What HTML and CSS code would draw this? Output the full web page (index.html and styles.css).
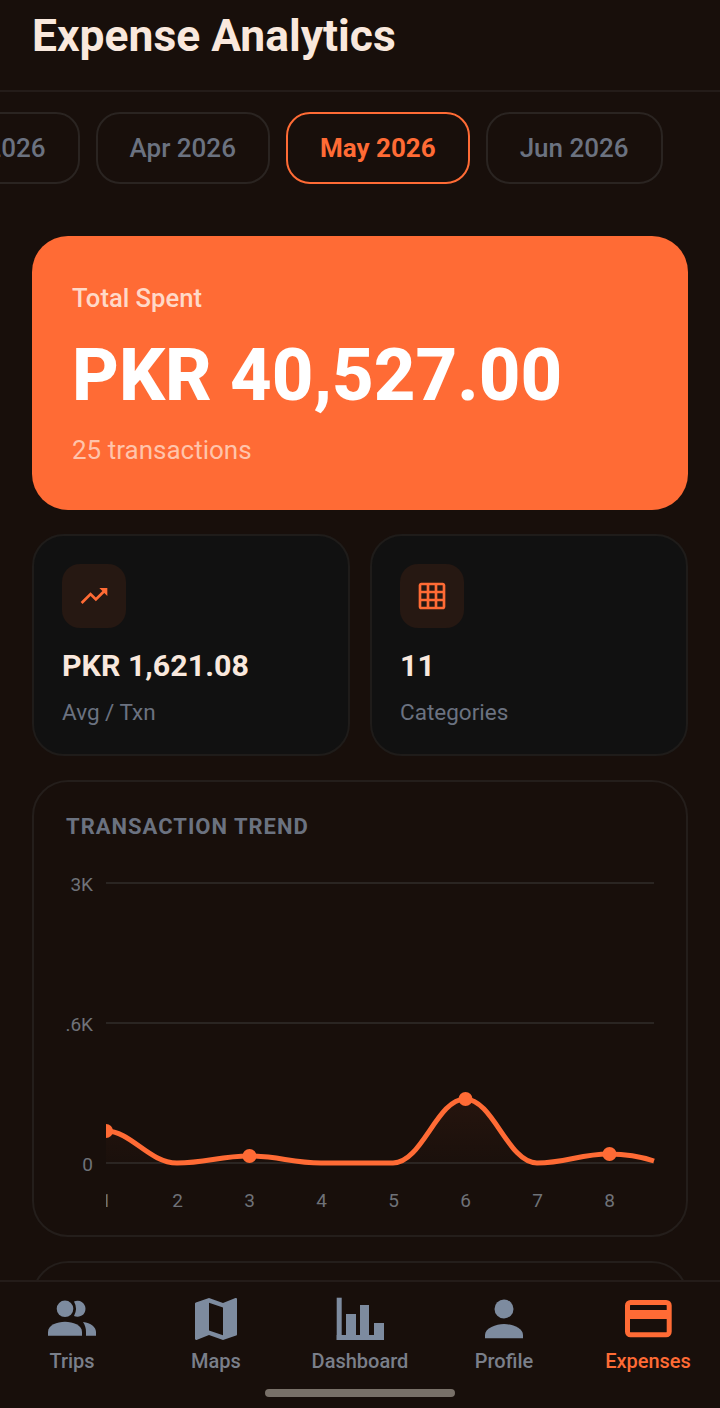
FILE: index.html
```html
<!DOCTYPE html>
<html lang="en">
<head>
    <meta charset="UTF-8">
    <title>Expense Analytics</title>
    <link rel="stylesheet" href="styles.css">
</head>
<body>
<div class="screen">
    <main class="main">
        <header class="header">
            <h1 class="title">Expense Analytics</h1>
        </header>

        <div class="months">
            <div class="month">Mar 2026</div>
            <div class="month">Apr 2026</div>
            <div class="month month-active">May 2026</div>
            <div class="month">Jun 2026</div>
        </div>

        <div class="content">
            <section class="total">
                <div class="total-label">Total Spent</div>
                <div class="total-value">PKR 40,527.00</div>
                <div class="total-sub">25 transactions</div>
            </section>

            <div class="stats">
                <section class="stat">
                    <div class="stat-icon">
                        <svg class="stat-svg" viewBox="0 0 24 24"><path d="M16 6l2.29 2.29-4.88 4.88-4-4L2 16.59 3.41 18l6-6 4 4 6.3-6.29L22 12V6z"/></svg>
                    </div>
                    <div class="stat-value">PKR 1,621.08</div>
                    <div class="stat-label">Avg / Txn</div>
                </section>
                <section class="stat">
                    <div class="stat-icon">
                        <svg class="stat-svg" viewBox="0 0 24 24"><path d="M20 2H4c-1.1 0-2 .9-2 2v16c0 1.1.9 2 2 2h16c1.1 0 2-.9 2-2V4c0-1.1-.9-2-2-2zM8 20H4v-4h4v4zm0-6H4v-4h4v4zm0-6H4V4h4v4zm6 12h-4v-4h4v4zm0-6h-4v-4h4v4zm0-6h-4V4h4v4zm6 12h-4v-4h4v4zm0-6h-4v-4h4v4zm0-6h-4V4h4v4z"/></svg>
                    </div>
                    <div class="stat-value">11</div>
                    <div class="stat-label">Categories</div>
                </section>
            </div>

            <section class="chart-card">
                <h2 class="chart-title">TRANSACTION TREND</h2>
                <svg class="chart" viewBox="0 0 652 375">
                    <defs>
                        <clipPath id="plot"><rect x="72" y="0" width="560" height="375"/></clipPath>
                        <linearGradient id="under" x1="0" y1="0" x2="0" y2="1">
                            <stop offset="0" stop-color="#ff6b35" stop-opacity="0.06"/>
                            <stop offset="1" stop-color="#ff6b35" stop-opacity="0.01"/>
                        </linearGradient>
                    </defs>

                    <line class="grid-line" x1="72" y1="23" x2="620" y2="23"/>
                    <line class="grid-line" x1="72" y1="163" x2="620" y2="163"/>
                    <line class="grid-line" x1="72" y1="303" x2="620" y2="303"/>

                    <text class="axis-y" x="59" y="31">3K</text>
                    <text class="axis-y" x="59" y="171">.6K</text>
                    <text class="axis-y" x="59" y="311">0</text>

                    <g clip-path="url(#plot)">
                        <path class="area" d="M72 271C97 271 115 303 143 303C172 303 186 296 215 296C244 296 258 303 287 303L359 303C388 303 403 239 431 239C459 239 474 303 503 303C532 303 546 294 575 294C590 294 605 296 620 301L620 303L72 303z"/>
                        <path class="curve" d="M72 271C97 271 115 303 143 303C172 303 186 296 215 296C244 296 258 303 287 303L359 303C388 303 403 239 431 239C459 239 474 303 503 303C532 303 546 294 575 294C590 294 605 296 620 301"/>
                        <circle class="dot" cx="72" cy="271" r="7"/>
                        <circle class="dot" cx="215.500" cy="296" r="7"/>
                        <circle class="dot" cx="431.500" cy="239" r="7"/>
                        <circle class="dot" cx="575.500" cy="294" r="7"/>

                        <text class="axis-x" x="72" y="347">1</text>
                        <text class="axis-x" x="143.500" y="347">2</text>
                        <text class="axis-x" x="215.500" y="347">3</text>
                        <text class="axis-x" x="287.500" y="347">4</text>
                        <text class="axis-x" x="359.500" y="347">5</text>
                        <text class="axis-x" x="431.500" y="347">6</text>
                        <text class="axis-x" x="503.500" y="347">7</text>
                        <text class="axis-x" x="575.500" y="347">8</text>
                    </g>
                </svg>
            </section>

            <section class="next-card"></section>
        </div>
    </main>

    <nav class="nav">
        <div class="nav-items">
            <div class="nav-item">
                <svg class="nav-icon" viewBox="0 0 56 56">
                    <circle cx="21" cy="17.8" r="8.3"/>
                    <path d="M30 10.6A8 8 0 1 1 30 25Q34 17.8 30 10.6z"/>
                    <path d="M4 44.7V41C4 34 13 30.7 21 30.7S38 34 38 41V44.7z"/>
                    <path d="M39 31C47 32 52 36 52 41V44.7H42V41C42 37 41 34 39 31z"/>
                </svg>
                <span class="nav-label">Trips</span>
            </div>
            <div class="nav-item">
                <svg class="nav-icon" viewBox="0 0 24 24"><path d="M20.5 3l-.16.03L15 5.1 9 3 3.36 4.9c-.21.07-.36.25-.36.48V20.5c0 .28.22.5.5.5l.16-.03L9 18.9l6 2.1 5.64-1.9c.21-.07.36-.25.36-.48V3.5c0-.28-.22-.5-.5-.5zM15 19l-6-2.11V5l6 2.11V19z"/></svg>
                <span class="nav-label">Maps</span>
            </div>
            <div class="nav-item">
                <svg class="nav-icon" viewBox="0 0 56 56">
                    <rect x="4.7" y="6.7" width="5" height="42.3"/>
                    <rect x="14" y="23" width="10" height="26"/>
                    <rect x="28" y="14" width="9" height="35"/>
                    <rect x="42" y="32" width="10" height="17"/>
                    <rect x="4.7" y="44" width="47.3" height="5"/>
                </svg>
                <span class="nav-label">Dashboard</span>
            </div>
            <div class="nav-item">
                <svg class="nav-icon" viewBox="0 0 56 56">
                    <circle cx="28" cy="18" r="9.5"/>
                    <path d="M9 47.3V44C9 37 20 33 28 33S47 37 47 44V47.3z"/>
                </svg>
                <span class="nav-label">Profile</span>
            </div>
            <div class="nav-item nav-item-active">
                <svg class="nav-icon" viewBox="0 0 56 56">
                    <rect class="card-outline" x="7.5" y="11.5" width="41.7" height="32.3" rx="3"/>
                    <rect x="7" y="19" width="43" height="9"/>
                </svg>
                <span class="nav-label">Expenses</span>
            </div>
        </div>
        <div class="home-bar"></div>
    </nav>
</div>
</body>
</html>
```

FILE: styles.css
```css
* {
    margin: 0;
    padding: 0;
    box-sizing: border-box;
}
body {
    background: #180f0b;
    font-family: Roboto, "Liberation Sans", sans-serif;
}
.screen {
    width: 720px;
    height: 1408px;
    display: flex;
    flex-direction: column;
    overflow: hidden;
}
.main {
    flex: 1;
    min-height: 0;
    overflow: hidden;
}

/* header */
.header {
    height: 92px;
    padding: 12px 32px 0;
    border-bottom: 2px solid #241c19;
}
.title {
    font-size: 44.400px;
    line-height: 48px;
    font-weight: 700;
    color: #f9e8dd;
}

/* month strip, scrolled sideways */
.months {
    display: flex;
    gap: 16px;
    margin: 20px 0 0 -100px;
}
.month {
    flex: none;
    height: 72px;
    line-height: 68px;
    padding: 0 32px;
    border: 2px solid #2a2421;
    border-radius: 24px;
    font-size: 26px;
    font-weight: 500;
    color: #6b7280;
}
.month-active {
    border-color: #ff6b35;
    color: #ff6b35;
    font-weight: 700;
}

.content {
    display: flex;
    flex-direction: column;
    gap: 24px;
    padding: 52px 32px 0;
}

/* total card */
.total {
    height: 274px;
    padding: 44px 40px 0;
    border-radius: 36px;
    background: #ff6b35;
}
.total-label {
    font-size: 25.600px;
    line-height: 36px;
    font-weight: 500;
    color: #ffd9c8;
}
.total-value {
    margin-top: 18px;
    font-size: 72.400px;
    line-height: 84px;
    font-weight: 800;
    color: #fff;
}
.total-sub {
    margin-top: 14px;
    font-size: 26px;
    line-height: 36px;
    color: #ffc4ab;
}

/* small stat cards */
.stats {
    display: grid;
    grid-template-columns: 1fr 1fr;
    gap: 20px;
}
.stat {
    height: 222px;
    padding: 28px;
    border: 2px solid #1f1c1a;
    border-radius: 32px;
    background: #111111;
}
.stat-icon {
    width: 64px;
    height: 64px;
    display: flex;
    align-items: center;
    justify-content: center;
    border-radius: 18px;
    background: #261812;
}
.stat-svg {
    width: 32px;
    height: 32px;
    fill: #ff6b35;
}
.stat-value {
    margin-top: 18px;
    font-size: 30.400px;
    line-height: 40px;
    font-weight: 700;
    color: #f9e8dd;
}
.stat-label {
    margin-top: 10px;
    font-size: 22.500px;
    line-height: 32px;
    color: #6b7280;
}

/* chart */
.chart-card {
    height: 457px;
    border: 2px solid #241e1b;
    border-radius: 36px;
}
.chart-title {
    margin: 29px 0 17px 32px;
    font-size: 22px;
    line-height: 32px;
    font-weight: 700;
    letter-spacing: 1px;
    color: #6b7280;
}
.chart {
    display: block;
    width: 652px;
    height: 375px;
}
.grid-line {
    stroke: #2a2522;
    stroke-width: 2;
}
.axis-y, .axis-x {
    font-size: 19px;
    fill: #6f7278;
}
.axis-y {
    text-anchor: end;
}
.axis-x {
    text-anchor: middle;
}
.area {
    fill: url(#under);
}
.curve {
    fill: none;
    stroke: #ff6b35;
    stroke-width: 5;
}
.dot {
    fill: #ff6b35;
}
.next-card {
    height: 100px;
    border: 2px solid #241e1b;
    border-radius: 36px;
}

/* bottom nav */
.nav {
    flex: none;
    height: 128px;
    border-top: 2px solid #241c19;
    background: #180f0b;
}
.nav-items {
    display: grid;
    grid-template-columns: repeat(5, 1fr);
    padding-top: 9px;
}
.nav-item {
    display: flex;
    flex-direction: column;
    align-items: center;
}
.nav-icon {
    width: 56px;
    height: 56px;
    fill: #7d8b9f;
}
.nav-label {
    font-size: 20px;
    line-height: 28px;
    font-weight: 500;
    color: #7a7f8a;
}
.nav-item-active .nav-icon {
    fill: #ff6b35;
}
.nav-item-active .nav-label {
    color: #ff6b35;
}
.nav-item-active .card-outline {
    fill: none;
    stroke: #ff6b35;
    stroke-width: 5;
}
.home-bar {
    width: 190px;
    height: 8px;
    margin: 14px auto 0;
    border-radius: 4px;
    background: #787068;
}
```
